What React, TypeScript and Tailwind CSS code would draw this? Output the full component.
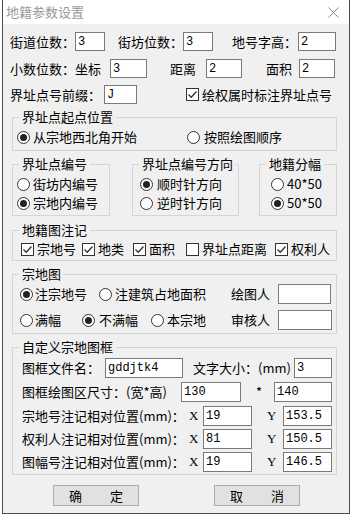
import clsx from "clsx";

function Radio({ checked, label, gap = "ml-[3px]", className }: { checked?: boolean; label: string; gap?: string; className?: string }) {
  return (
    <div className={clsx("flex h-[16px] shrink-0 items-center whitespace-nowrap", className)}>
      <span className="flex h-[13px] w-[13px] shrink-0 items-center justify-center rounded-full border border-[#333] bg-white">
        {checked && <span className="h-[7px] w-[7px] rounded-full bg-[#222]" />}
      </span>
      <span className={gap}>{label}</span>
    </div>
  );
}

function Check({ checked, label, className }: { checked?: boolean; label: string; className?: string }) {
  return (
    <div className={clsx("flex h-[16px] shrink-0 items-center whitespace-nowrap", className)}>
      <span className="flex h-[13px] w-[13px] shrink-0 items-center justify-center border border-[#333] bg-white">
        {checked && (
          <svg width="11" height="11" viewBox="0 0 11 11">
            <path d="M1.5 5.5 L4.2 8.2 L9.5 2.5" fill="none" stroke="#333" strokeWidth="1.3" />
          </svg>
        )}
      </span>
      <span className="ml-[3px]">{label}</span>
    </div>
  );
}

function Field({ value = "", w }: { value?: string; w: string }) {
  return (
    <div className={clsx("flex h-[19px] shrink-0 items-center border border-[#7a7a7a] bg-white pl-[2px] font-['Liberation_Mono',monospace] text-[12px] leading-none", w)}>
      {value}
    </div>
  );
}

function Group({ title, className, children }: { title: string; className?: string; children: React.ReactNode }) {
  return (
    <fieldset className={clsx("min-w-0 border border-[#d5d5d5]", className)}>
      <legend className="ml-[6px] px-[3px] text-[13px] leading-[16px]">{title}</legend>
      {children}
    </fieldset>
  );
}

function Label({ w, children, className }: { w: string; children: React.ReactNode; className?: string }) {
  return <span className={clsx("shrink-0 whitespace-nowrap", w, className)}>{children}</span>;
}

export default function App() {
  return (
    <div className="h-[517px] w-[351px] overflow-hidden bg-white pl-[2px] font-['Noto_Sans_CJK_SC',sans-serif] text-[13px] leading-[16px] text-black">
      <div className="flex h-[514px] w-[348px] flex-col border-x border-b border-[#4a4a4a] bg-[#f0f0f0]">
        {/* title bar */}
        <div className="flex h-[24px] shrink-0 items-center justify-between bg-white pl-[3px] pr-[10px] text-[#9a9a9a]">
          <span>地籍参数设置</span>
          <svg width="11" height="11" viewBox="0 0 11 11">
            <path d="M0.5 0.5 L10.5 10.5 M10.5 0.5 L0.5 10.5" stroke="#8a8a8a" strokeWidth="1" />
          </svg>
        </div>

        <div className="flex flex-col pt-[8px]">
          <div className="flex items-center pl-[7px]">
            <Label w="w-[65px]">街道位数：</Label>
            <Field value="3" w="w-[30px]" />
            <Label w="w-[65px]" className="ml-[13px]">街坊位数：</Label>
            <Field value="3" w="w-[30px]" />
            <Label w="w-[66px]" className="ml-[19px]">地号字高：</Label>
            <Field value="2" w="w-[38px]" />
          </div>
          <div className="mt-[8px] flex items-center pl-[7px]">
            <Label w="w-[100px]">小数位数：坐标</Label>
            <Field value="3" w="w-[37px]" />
            <Label w="w-[36px]" className="ml-[23px]">距离</Label>
            <Field value="2" w="w-[36px]" />
            <Label w="w-[33px]" className="ml-[24px]">面积</Label>
            <Field value="2" w="w-[36px]" />
          </div>
          <div className="mt-[7px] flex items-center pl-[7px]">
            <Label w="w-[94px]">界址点号前缀：</Label>
            <Field value="J" w="w-[33px]" />
            <Check checked label="绘权属时标注界址点号" className="ml-[49px]" />
          </div>

          <Group title="界址点起点位置" className="ml-[9px] mt-[5px] w-[325px]">
            <div className="flex pb-[5px] pl-[4px] pt-[4px]">
              <Radio checked label="从宗地西北角开始" className="w-[170px]" />
              <Radio label="按照绘图顺序" gap="ml-[4px]" />
            </div>
          </Group>

          <div className="ml-[9px] mt-[5px] flex">
            <Group title="界址点编号" className="w-[98px]">
              <div className="flex flex-col gap-[3px] pb-[4px] pl-[4px] pt-[4px]">
                <Radio label="街坊内编号" />
                <Radio checked label="宗地内编号" />
              </div>
            </Group>
            <Group title="界址点编号方向" className="ml-[22px] w-[107px]">
              <div className="flex flex-col gap-[3px] pb-[4px] pl-[7px] pt-[4px]">
                <Radio checked label="顺时针方向" gap="ml-[4px]" />
                <Radio label="逆时针方向" gap="ml-[4px]" />
              </div>
            </Group>
            <Group title="地籍分幅" className="ml-[20px] w-[78px]">
              <div className="flex flex-col gap-[3px] pb-[4px] pl-[11px] pt-[4px]">
                <Radio label="40*50" />
                <Radio checked label="50*50" />
              </div>
            </Group>
          </div>

          <Group title="地籍图注记" className="ml-[9px] mt-[6px] w-[325px]">
            <div className="flex pb-[3px] pl-[8px] pt-[3px]">
              <Check checked label="宗地号" className="w-[61px]" />
              <Check checked label="地类" className="w-[51px]" />
              <Check checked label="面积" className="w-[53px]" />
              <Check label="界址点距离" className="w-[89px]" />
              <Check checked label="权利人" />
            </div>
          </Group>

          <Group title="宗地图" className="ml-[9px] mt-[5px] w-[325px]">
            <div className="flex flex-col gap-[6px] pb-[3px] pl-[7px] pt-[2px]">
              <div className="flex h-[20px] items-center">
                <Radio checked label="注宗地号" gap="ml-[2px]" className="w-[79px]" />
                <Radio label="注建筑占地面积" gap="ml-[3px]" className="w-[132px]" />
                <Label w="w-[47px]">绘图人</Label>
                <Field w="w-[53px] h-[20px]" />
              </div>
              <div className="flex h-[20px] items-center">
                <Radio label="满幅" gap="ml-[2px]" className="w-[62px]" />
                <Radio checked label="不满幅" gap="ml-[4px]" className="w-[69px]" />
                <Radio label="本宗地" gap="ml-[3px]" className="w-[80px]" />
                <Label w="w-[47px]">审核人</Label>
                <Field w="w-[54px] h-[20px]" />
              </div>
            </div>
          </Group>

          <Group title="自定义宗地图框" className="ml-[9px] mt-[5px] w-[325px]">
            <div className="flex flex-col pb-[2px] pl-[9px] pt-[3px]">
              <div className="flex h-[20px] items-center">
                <Label w="w-[83px]">图框文件名：</Label>
                <Field value="gddjtk4" w="w-[78px] h-[20px]" />
                <Label w="w-[101px]" className="ml-[10px]">文字大小：(mm)</Label>
                <Field value="3" w="w-[38px] h-[20px]" />
              </div>
              <div className="mt-[4px] flex h-[20px] items-center">
                <Label w="w-[159px]">图框绘图区尺寸：(宽*高)</Label>
                <Field value="130" w="w-[60px] h-[20px]" />
                <Label w="w-[33px]" className="pl-[15px]">*</Label>
                <Field value="140" w="w-[58px] h-[20px]" />
              </div>
              {[
                ["宗地号注记相对位置(mm)：", "19", "153.5", "mt-[4px]"],
                ["权利人注记相对位置(mm)：", "81", "150.5", "mt-[3px]"],
                ["图幅号注记相对位置(mm)：", "19", "146.5", "mt-[3px]"],
              ].map(([label, x, y, mt]) => (
                <div key={label} className={clsx("flex h-[20px] items-center", mt)}>
                  <Label w="w-[167px]">{label}</Label>
                  <Label w="w-[14px]" className="font-['Liberation_Serif',serif]">X</Label>
                  <Field value={x} w="w-[49px] h-[20px]" />
                  <Label w="w-[31px]" className="pl-[15px] font-['Liberation_Serif',serif]">Y</Label>
                  <Field value={y} w="w-[49px] h-[20px]" />
                </div>
              ))}
            </div>
          </Group>

          <div className="ml-[50px] mt-[10px] flex">
            <button className="flex h-[21px] w-[86px] items-center justify-center gap-[28px] border border-[#adadad] bg-[#e1e1e1]">
              <span>确</span>
              <span>定</span>
            </button>
            <button className="ml-[75px] flex h-[21px] w-[86px] items-center justify-center gap-[28px] border border-[#adadad] bg-[#e1e1e1]">
              <span>取</span>
              <span>消</span>
            </button>
          </div>
        </div>
      </div>
    </div>
  );
}
